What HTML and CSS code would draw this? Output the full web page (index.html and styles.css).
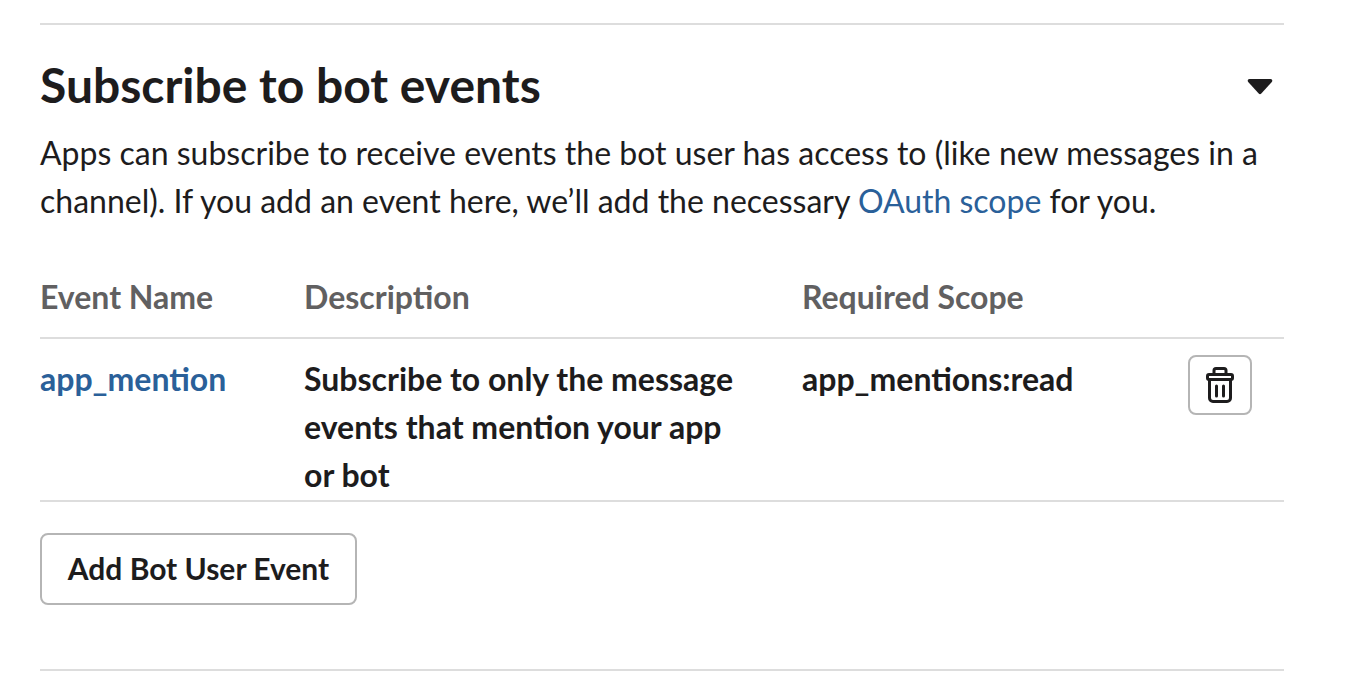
FILE: index.html
```html
<!DOCTYPE html>
<html lang="en">
<head>
    <meta charset="UTF-8">
    <meta name="viewport" content="width=device-width, initial-scale=1.0">
    <title>Subscribe to bot events</title>
    <link rel="stylesheet" href="styles.css">
</head>
<body>

<section class="panel">
    <div class="panel-head">
        <h2>Subscribe to bot events</h2>
        <svg class="caret" width="26" height="18" viewBox="0 0 26 18">
            <path d="M2.500 1h21a1.800 1.800 0 0 1 1.300 3L14.300 15.600a1.800 1.800 0 0 1-2.600 0L1.200 4a1.800 1.800 0 0 1 1.300-3z"/>
        </svg>
    </div>
    <p class="intro">Apps can subscribe to receive events the bot user has access to (like new messages in a channel). If you add an event here, we’ll add the necessary <a href="#">OAuth scope</a> for you.</p>

    <div class="events">
        <div class="row head-row">
            <div>Event Name</div>
            <div>Description</div>
            <div>Required Scope</div>
            <div></div>
        </div>
        <div class="row event-row">
            <div><a href="#">app_mention</a></div>
            <div>Subscribe to only the message events that mention your app or bot</div>
            <div>app_mentions:read</div>
            <div class="actions">
                <button class="icon-btn" aria-label="Remove">
                    <svg width="28" height="36" viewBox="0 0 28 36" fill="none" stroke="#1d1c1d" stroke-width="3" stroke-linejoin="round" stroke-linecap="round">
                        <path d="M8 7V3.500a2 2 0 0 1 2-2h8a2 2 0 0 1 2 2V7"/>
                        <rect x="1.500" y="7.500" width="25" height="5" rx="1.500"/>
                        <path d="M3.500 12.500V31a3.500 3.500 0 0 0 3.500 3.500h14a3.500 3.500 0 0 0 3.500-3.500V12.500"/>
                        <path d="M10.500 19v10M17.500 19v10"/>
                    </svg>
                </button>
            </div>
        </div>
    </div>

    <button class="add-btn">Add Bot User Event</button>
</section>

</body>
</html>
```

FILE: styles.css
```css
* {
    margin: 0;
    padding: 0;
    box-sizing: border-box;
}

body {
    background-color: #fff;
    color: #1d1c1d;
    font-family: Lato, sans-serif;
    font-size: 32px;
    line-height: 48px;
    padding: 23px 64px 0 40px;
}

a {
    color: #2a6099;
    text-decoration: none;
}

.panel {
    border-top: 2px solid #dddddd;
    border-bottom: 2px solid #dddddd;
    height: 648px;
}

.panel-head {
    display: flex;
    justify-content: space-between;
    align-items: center;
    margin-top: 30px;
    height: 60px;
}

h2 {
    font-size: 48px;
    font-weight: 700;
    line-height: 60px;
}

.caret {
    fill: #1d1c1d;
    margin-top: 4px;
    margin-right: 11px;
}

.intro {
    margin-top: 14px;
}

.events {
    margin-top: 48px;
}

.row {
    display: grid;
    grid-template-columns: 264px 498px 386px 1fr;
    border-bottom: 2px solid #dddddd;
}

.head-row {
    color: #616061;
    font-weight: 700;
    padding-bottom: 16px;
}

.event-row {
    font-weight: 700;
    padding: 16px 0 1px;
}

.event-row > div:nth-child(2) {
    padding-right: 64px;
}

.actions {
    display: flex;
    align-items: flex-start;
}

.icon-btn {
    display: flex;
    justify-content: center;
    align-items: center;
    width: 64px;
    height: 60px;
    background-color: #fff;
    border: 2px solid #b5b5b5;
    border-radius: 8px;
}

.add-btn {
    display: block;
    margin-top: 31px;
    width: 317px;
    height: 72px;
    padding-bottom: 2px;
    background-color: #fff;
    border: 2px solid #b5b5b5;
    border-radius: 8px;
    color: #1d1c1d;
    font-family: inherit;
    font-size: 30px;
    font-weight: 700;
}
```
